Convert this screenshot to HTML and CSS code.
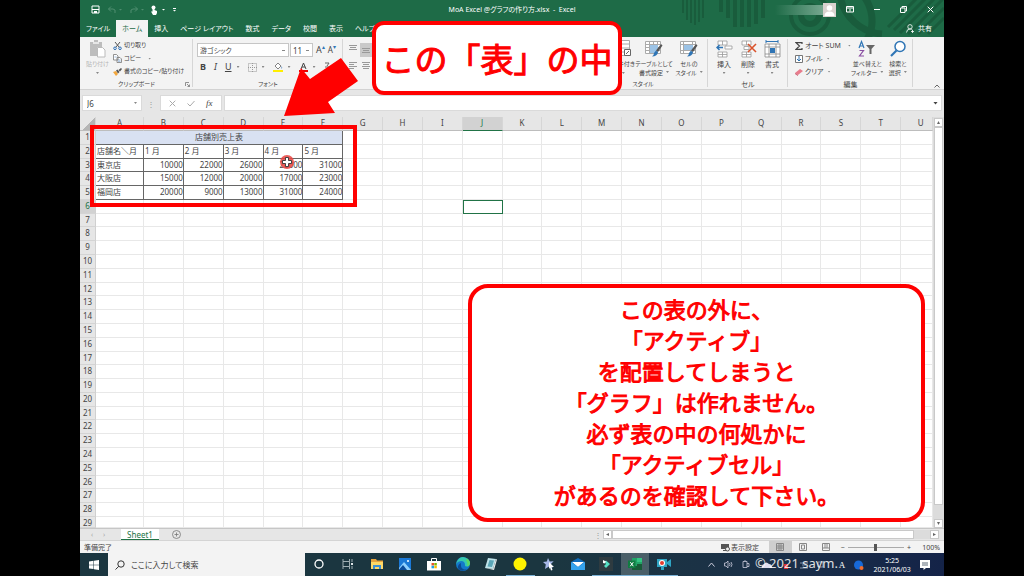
FILE: index.html
```html
<!DOCTYPE html>
<html lang="ja">
<head>
<meta charset="utf-8">
<meta name="viewport" content="width=device-width, initial-scale=1">
<title>MoA Excel @グラフの作り方.xlsx - Excel</title>
<link rel="stylesheet" href="styles.css">
</head>
<body>
<div class="stage">
<main class="app">
  <header class="top">
    <svg class="top-art" viewBox="0 0 264 37" aria-hidden="true">
      <g stroke="#195c3c" fill="none">
        <path stroke-width="2" d="M3 0v13M7 0v20M11 0v23M15 0v25M19 0v22M23 0v18"/>
        <path stroke-width="4" d="M41 0v12M48 0v18M55 0v27M62 0v27M69 0v27M76 0v24M83 0v18"/>
        <circle cx="130" cy="15" r="9" stroke-width="6"/>
        <circle cx="130" cy="15" r="19" stroke-width="4"/>
        <path stroke-width="7" d="M174 -12a38 38 0 0 1 8 58M160 -4a46 46 0 0 0 42 38"/>
        <path stroke-width="3" d="M208 27L240 -5M214 30L250 -6M220 33L260 -7M228 34L264 -2M238 34L264 8M248 34L264 18"/>
      </g>
    </svg>
    <div class="titlebar">
      <div class="quick">
        <button class="ib" aria-label="上書き保存"><svg width="9" height="9" viewBox="0 0 9 9"><path fill="none" stroke="#fff" d="M1 1h7v7H1z"/><path fill="#fff" d="M1 4h7v1H1zM3 6h3v2H3z"/></svg></button>
        <button class="ib" aria-label="元に戻す"><svg width="16" height="8" viewBox="0 0 16 8"><path fill="none" stroke="#4f8e70" d="M5 0.500L2.500 3 5 5.500M2.500 3H7q3 0 2 4"/><path fill="#4f8e70" d="M13 3h3l-1.500 1.500z"/></svg></button>
        <button class="ib" aria-label="やり直し"><svg width="16" height="8" viewBox="0 0 16 8"><path fill="none" stroke="#4f8e70" d="M7 0.500L9.500 3 7 5.500M9.500 3H5q-3 0-2 4"/><path fill="#4f8e70" d="M13 3h3l-1.500 1.500z"/></svg></button>
        <button class="ib" aria-label="タッチ"><svg width="16" height="10" viewBox="0 0 16 10"><circle cx="3.500" cy="2.500" r="2" fill="#fff"/><path fill="#fff" d="M2.500 2h2v3L7 6v2L6 10H3L1 6.500h1.500z"/><path fill="#fff" d="M12 4h3l-1.500 1.500z"/></svg></button>
        <button class="ib" aria-label="カスタマイズ"><svg width="5" height="5" viewBox="0 0 5 5"><path fill="#fff" d="M1 1h3v1H1zM1 3h3L2.500 4.500z"/></svg></button>
      </div>
      <h1 class="doc">MoA Excel @グラフの作り方.xlsx&nbsp; -&nbsp; Excel</h1>
      <div class="window-tools">
        <span class="account"></span>
        <svg width="13" height="14" viewBox="0 0 13 14" role="img" aria-label="ユーザー"><path fill="#d9d2cf" d="M0 0h13v14H0z"/><circle cx="6.500" cy="5" r="2.800" fill="#fff"/><path fill="#fff" d="M1.500 13q0-4.500 5-4.500t5 4.500z"/></svg>
        <button class="wb" aria-label="リボンの表示オプション"><svg width="8" height="7" viewBox="0 0 8 7"><path fill="none" stroke="#fff" d="M.5.500h7v5.500h-7zM.5 2h7M4 5.500V3"/></svg></button>
        <button class="wb" aria-label="最小化"><svg width="6" height="7" viewBox="0 0 6 7"><path fill="#fff" d="M0 3h6v1H0z"/></svg></button>
        <button class="wb" aria-label="元のサイズ"><svg width="7" height="7" viewBox="0 0 7 7"><path fill="none" stroke="#fff" d="M.5 2h4.500v4.500H.5zM2 2V.5h4.500V5H5"/></svg></button>
        <button class="wb" aria-label="閉じる"><svg width="7" height="7" viewBox="0 0 7 7"><path stroke="#fff" d="M.7.700l5.600 5.600M6.300.700L.7 6.300"/></svg></button>
      </div>
    </div>
    <nav class="tabs">
      <a href="#file">ファイル</a><a href="#home" class="on">ホーム</a><a href="#insert">挿入</a><a href="#layout">ページ レイアウト</a><a href="#formula">数式</a><a href="#data">データ</a><a href="#review">校閲</a><a href="#view">表示</a><a href="#help">ヘルプ</a>
      <a href="#share" class="share"><svg width="8" height="9" viewBox="0 0 8 9"><g fill="none" stroke="#fff" stroke-width=".8"><circle cx="4" cy="2.800" r="2.200"/><path d="M.5 8.500q.3-3.500 3.500-3.500 1.500 0 2.500 1M5 7.500h3M6.500 6v3"/></g></svg>共有</a>
    </nav>
  </header>

  <section class="ribbon" aria-label="リボン">
    <div class="group clip">
      <div class="tools">
        <button class="big off"><svg width="17" height="18" viewBox="0 0 17 18"><path fill="#bdbdbd" d="M1 2h4V0h4v2h4v5H8v9H1z"/><path fill="#e6e6e6" d="M4 2h6v2H4z"/><path fill="#fff" stroke="#bbb" d="M8.500 7.500h5l2.500 2.500v7H8.500z"/></svg><span>貼り付け</span><i class="caret"></i></button>
        <div class="stack">
          <button class="row"><svg width="9" height="8" viewBox="0 0 9 8"><path stroke="#555" d="M2 0l4 5M7 0L3 5"/><g fill="none" stroke="#2f6fb5"><circle cx="2" cy="6.300" r="1.300"/><circle cx="7" cy="6.300" r="1.300"/></g></svg>切り取り</button>
          <button class="row"><svg width="9" height="9" viewBox="0 0 9 9"><path fill="#fff" stroke="#777" stroke-width=".8" d="M.5.500h3l1.500 1.500v4h-4.500zM4 3.500h3l1.500 1.500v3.500H4z"/><path stroke="#5a8cc4" stroke-width=".6" d="M1.500 3h2M5 6h2.500M5 7.300h2.500"/></svg>コピー<i class="caret far"></i></button>
          <button class="row"><svg width="9" height="8" viewBox="0 0 9 8"><path fill="#f2a63b" d="M0 4l3-1 2 3-2 2z"/><path fill="#555" d="M3 2.500l1.500-1 2 2.500-1.500 1.500zM5.500 2L8 0l1 1-2 2.500z"/></svg>書式のコピー/貼り付け</button>
        </div>
      </div>
      <div class="label">クリップボード<svg class="launch" width="5" height="5" viewBox="0 0 5 5"><path fill="none" stroke="#777" stroke-width=".8" d="M.5 4V.5H4M2 2l2.500 2.500M4.500 2.500v2h-2"/></svg></div>
    </div>
    <div class="group font">
      <div class="tools col">
        <div class="line">
          <select class="face" aria-label="フォント"><option>游ゴシック</option></select>
          <select class="size" aria-label="フォント サイズ"><option>11</option></select>
          <button class="glyph">A<sup>▴</sup></button><button class="glyph small">A<sup>▾</sup></button>
        </div>
        <div class="line fmt">
          <button class="glyph"><b>B</b></button><button class="glyph"><em>I</em></button><button class="glyph"><u>U</u></button><i class="caret"></i>
          <button class="glyph" aria-label="罫線"><svg width="9" height="9" viewBox="0 0 9 9"><path fill="none" stroke="#999" stroke-dasharray="1 1" d="M.5.500h8v8h-8zM4.500 0v9M0 4.500h9"/></svg></button><i class="caret"></i>
          <button class="glyph" aria-label="塗りつぶしの色"><svg width="10" height="10" viewBox="0 0 10 10"><path fill="#fff" stroke="#666" stroke-width=".8" d="M2 4l3-3 3 3-3 3z"/><path fill="#2f6fb5" d="M8.500 4q1.500 2 0 3z"/><path fill="#ffee00" d="M0 8h10v2H0z"/></svg></button><i class="caret"></i>
          <button class="glyph" aria-label="フォントの色"><svg width="9" height="10" viewBox="0 0 9 10"><path fill="none" stroke="#444" d="M2 7l2.500-6L7 7M3 5h3"/><path fill="#e00" d="M0 8h9v2H0z"/></svg></button><i class="caret"></i>
          <button class="glyph" aria-label="ふりがな"><svg width="7" height="10" viewBox="0 0 7 10"><path fill="none" stroke="#666" d="M1 1h4L3 4M1 5h5L2 9h4"/></svg></button>
        </div>
      </div>
      <div class="label">フォント</div>
    </div>
    <div class="group align">
      <div class="tools">
        <svg width="42" height="34" viewBox="0 0 42 34"><path fill="#c9c9c9" d="M17 3h14v14H17z"/><path stroke="#999" d="M6 5.500h8M7 7.500h6M6 9.500h8M19 8.500h8M20 10.500h6M19 12.500h8M6 22.500h8M6 24.500h5M6 26.500h8M6 28.500h5M19 22.500h8M20 24.500h6M19 26.500h8M20 28.500h6"/></svg>
      </div>
      <div class="label"></div>
    </div>
    <div class="group style">
      <div class="tools end">
        <button class="big w1"><svg width="16" height="18" viewBox="0 0 16 18"><path fill="#fff" stroke="#aaa" d="M.5.500h14v15H.5zM0 4h15M0 8h15M0 12h15M5 0v15"/><path fill="#fff" stroke="#666" d="M9.500 9.500h6v6h-6zM11 14l3-3"/></svg><span>条件付き</span><i class="caret"></i></button>
        <button class="big w2"><svg width="18" height="18" viewBox="0 0 18 18"><path fill="#fff" stroke="#aaa" d="M.5 1.500h15v12H.5zM.5 4.500h15M.5 7.500h15M.5 10.500h15M4.500 1.500v12M8.500 1.500v12M12.500 1.500v12"/><path fill="#9cc3e6" d="M5 5h8v8H5z"/><path fill="#555" d="M16 4l1.500 1.500L13 12l-2-1.500z"/><path fill="#2f75b5" d="M11 10.500l2 2q-1 4-6 4 2-1 2-3.500z"/></svg><span>テーブルとして<br>書式設定<i class="caret in"></i></span></button>
        <button class="big w3"><svg width="18" height="18" viewBox="0 0 18 18"><path fill="#fff" stroke="#aaa" d="M.5 1.500h15v12H.5zM.5 4.500h15M.5 10.500h15M3.500 1.500v12M12.500 1.500v12"/><path fill="#9cc3e6" d="M4 5h9v5H4z"/><path fill="#555" d="M16 4l1.500 1.500L13 12l-2-1.500z"/><path fill="#2f75b5" d="M11 10.500l2 2q-1 4-6 4 2-1 2-3.500z"/></svg><span>セルの<br>スタイル<i class="caret in"></i></span></button>
      </div>
      <div class="label">スタイル</div>
    </div>
    <div class="group cells">
      <div class="tools even">
        <button class="big"><svg width="17" height="18" viewBox="0 0 17 18"><path fill="#fff" stroke="#999" stroke-width=".8" d="M2 1h9v4H2zM6.500 1v4M2 12h9v5H2zM6.500 12v5M2 14.500h9M9 6h7v3H9z"/><path fill="none" stroke="#2f75b5" stroke-width="1.500" d="M7 7.500H1M3.500 5L1 7.500 3.500 10"/></svg><span>挿入</span><i class="caret"></i></button>
        <button class="big"><svg width="17" height="18" viewBox="0 0 17 18"><path fill="#fff" stroke="#999" stroke-width=".8" d="M2 1h9v4H2zM6.500 1v4M2 12h9v5H2zM6.500 12v5M2 14.500h9M4 6.500h5v3H4z"/><path fill="none" stroke="#d9532c" stroke-width="1.600" d="M8 4l8 8M16 4l-8 8"/></svg><span>削除</span><i class="caret"></i></button>
        <button class="big"><svg width="17" height="18" viewBox="0 0 17 18"><path fill="#fff" stroke="#888" stroke-width=".8" d="M1 4h15v13H1zM5 4v13M12 4v13M1 7h15M1 14h15"/><path fill="#2f75b5" d="M6 8h5v5H6z"/><path fill="none" stroke="#2f75b5" d="M2 1.500h12M2 0v3M14 0v3"/></svg><span>書式</span><i class="caret"></i></button>
      </div>
      <div class="label">セル</div>
    </div>
    <div class="group edit">
      <div class="tools">
        <div class="stack">
          <button class="row"><svg width="8" height="8" viewBox="0 0 8 8"><path fill="none" stroke="#444" stroke-width="1.200" d="M7 2V.6H1L4.500 4 1 7.400h6V6"/></svg>オート SUM<i class="caret far"></i></button>
          <button class="row"><svg width="8" height="8" viewBox="0 0 8 8"><path fill="#fff" stroke="#777" d="M.5.500h7v7h-7z"/><path fill="none" stroke="#2f75b5" d="M4 1v5M2 4l2 2 2-2"/></svg>フィル<i class="caret near"></i></button>
          <button class="row"><svg width="8" height="8" viewBox="0 0 8 8"><path fill="#e87c8c" d="M0 5l5-4 3 2-5 4z"/><path fill="#c9566a" d="M0 5l3 2v1L0 6z"/></svg>クリア<i class="caret near"></i></button>
        </div>
        <button class="big"><svg width="18" height="18" viewBox="0 0 18 18"><path fill="none" stroke="#2f75b5" stroke-width="1.200" d="M1 8l2.500-6.500L6 8M2 6h3"/><path fill="none" stroke="#8a4fa3" stroke-width="1.200" d="M1.500 10.500h4L1.500 16h4.500"/><path fill="#666" d="M8 5h9l-3.500 4v5h-2V9z"/></svg><span>並べ替えと<br>フィルター<i class="caret in"></i></span></button>
        <button class="big"><svg width="18" height="18" viewBox="0 0 18 18"><circle cx="11" cy="6.500" r="5" fill="#fff" stroke="#2f75b5" stroke-width="1.500"/><path stroke="#2f75b5" stroke-width="2.200" d="M7.500 10.500L2 16"/></svg><span>検索と<br>選択<i class="caret in"></i></span></button>
      </div>
      <div class="label">編集</div>
    </div>
    <button class="collapse" aria-label="リボンを折りたたむ"><svg width="6" height="4" viewBox="0 0 6 4"><path fill="none" stroke="#666" d="M.5 3.500L3 1l2.500 2.500"/></svg></button>
  </section>

  <div class="formula">
    <div class="namebox"><input aria-label="名前ボックス" value="J6"><i class="caret"></i></div>
    <span class="grip">⋮</span>
    <div class="fx">
      <button aria-label="キャンセル"><svg width="7" height="7" viewBox="0 0 7 7"><path stroke="#aaa" d="M.7.700l5.600 5.600M6.300.700L.7 6.300"/></svg></button>
      <button aria-label="入力"><svg width="8" height="7" viewBox="0 0 8 7"><path fill="none" stroke="#aaa" d="M.5 3.500L3 6l4.500-5"/></svg></button>
      <button class="fn" aria-label="関数の挿入">fx</button>
    </div>
    <div class="entry"><input aria-label="数式バー"><i class="caret dark"></i></div>
  </div>

  <div class="book">
    <table class="grid" id="grid"><thead></thead><tbody></tbody></table>
    <div class="vscroll"><b class="arr up"></b><span class="thumb"></span><b class="arr down"></b></div>
  </div>

  <div class="sheetbar">
    <span class="nav">‹</span><span class="nav">›</span>
    <button class="sheet">Sheet1</button>
    <button class="add" aria-label="新しいシート"><svg width="9" height="9" viewBox="0 0 9 9"><g fill="none" stroke="#777" stroke-width=".8"><circle cx="4.500" cy="4.500" r="4"/><path d="M4.500 2.500v4M2.500 4.500h4"/></g></svg></button>
    <span class="grip push">⋮</span>
    <div class="hscroll"><b class="arr left"></b><span class="thumb"></span><b class="arr right"></b></div>
  </div>

  <footer class="status">
    <span>準備完了</span>
    <button class="disp"><svg width="9" height="9" viewBox="0 0 9 9"><path fill="#555" d="M0 1h8v5H0zM2 7h3v1H2z"/><circle cx="6.500" cy="6" r="2" fill="#f3f3f3" stroke="#555"/></svg>表示設定</button>
    <button class="vw on" aria-label="標準"><svg width="8" height="8" viewBox="0 0 8 8"><path fill="none" stroke="#888" d="M.5.500h7v7h-7zM0 3h8M0 5h8M3 0v8M5 0v8"/></svg></button>
    <button class="vw" aria-label="ページ レイアウト"><svg width="8" height="8" viewBox="0 0 8 8"><path fill="none" stroke="#888" d="M.5.500h7v7h-7zM2.500 2h3v4h-3z"/></svg></button>
    <button class="vw" aria-label="改ページ プレビュー"><svg width="8" height="8" viewBox="0 0 8 8"><path fill="none" stroke="#888" d="M.5.500h7v7h-7zM3 0v5M5 0v5M0 5h8"/></svg></button>
    <label class="zoom"><span>−</span><input type="range" min="10" max="190" value="100" aria-label="ズーム"><span>+</span></label>
    <output class="pct">100%</output>
  </footer>

  <nav class="taskbar" aria-label="タスク バー">
    <button class="start" aria-label="スタート"><svg width="10" height="10" viewBox="0 0 10 10"><path fill="#fff" d="M0 1.500l4.500-.7v3.900H0zM5 .7l5-.7v4.700H5zM0 5.200h4.500v3.900L0 8.500zM5 5.200h5V10l-5-.8z"/></svg></button>
    <label class="search"><svg width="10" height="10" viewBox="0 0 10 10"><g fill="none" stroke="#333"><circle cx="6" cy="4" r="3.200"/><path d="M3.800 6.300L.5 9.500"/></g></svg><input placeholder="ここに入力して検索" aria-label="検索"></label>
    <div class="pins">
      <button aria-label="Cortana"><svg viewBox="0 0 14 14"><circle cx="7" cy="7" r="4" fill="none" stroke="#fff" stroke-width="1.300"/></svg></button>
      <button aria-label="タスク ビュー"><svg viewBox="0 0 14 14"><path fill="none" stroke="#aebcc0" stroke-width=".9" d="M2 2v2.500h6.500V2M2 12V9.500h6.500V12M2 4.500v5M8.500 4.500v5M11 2v3M11 9v3"/><path fill="#dfe6e8" d="M10 6h2v2h-2z"/></svg></button>
      <button aria-label="エクスプローラー"><svg viewBox="0 0 14 14"><path fill="#e8a33d" d="M1 2h5l1 1.500h6V12H1z"/><path fill="#ffd867" d="M1 5h12v7H1z"/><path fill="#3f8fd2" d="M3 8h8v4H9v-2H5v2H3z"/></svg></button>
      <button aria-label="フォト"><svg viewBox="0 0 14 14"><path fill="#1a78d6" d="M1 1h12v12H1z"/><path fill="#8fd0ff" d="M1 11l5-6 7 8H1z"/><path fill="#0b4c9c" d="M1 12.500L5 8l4 5H1z"/><circle cx="10" cy="4" r="1" fill="#fff"/></svg></button>
      <button aria-label="ストア"><svg viewBox="0 0 14 14"><path fill="none" stroke="#fff" d="M4.500 4V1.500h5V4"/><path fill="#fff" d="M0 4h14v9.500H0z"/><path fill="#e5532d" d="M4.500 6H7v2.500H4.500z"/><path fill="#7db700" d="M7.300 6h2.500v2.500H7.300z"/><path fill="#1da1e8" d="M4.500 8.800H7v2.500H4.500z"/><path fill="#fdb900" d="M7.300 8.800h2.500v2.500H7.300z"/></svg></button>
      <button aria-label="Edge"><svg viewBox="0 0 14 14"><circle cx="7" cy="7" r="7" fill="#1479c9"/><path fill="#36c8b0" d="M1 4.500Q4-1 9 .4q5 1.600 5 6Q13.500 9 11 9.500q-2.500 0-2-1.500Q9 4 5 4 2 4 0 7z"/><path fill="#0c4a90" d="M5 6q-1 5 3 6.500 3 .5 4.500-1.500Q10 14 6 13.800 1 12.500 2 9q1-2.500 3-3z"/><path fill="#5bd764" d="M11 1.500Q14.500 4 14 7q-.5 2-3 2.500 1-4-1-6z"/></svg></button>
      <button aria-label="メモ帳"><svg viewBox="0 0 14 14"><path fill="#bfe3ea" d="M4 1l8 1-3 10-8-1z"/><path fill="#5ba6b7" d="M5.500 3l4.500.6-2 6.500-4.500-.6z"/><path fill="#e8e8e8" d="M1 11l8 1 3-10 1 .5-3 10.500z"/></svg></button>
      <button class="run" aria-label="黄色"><svg viewBox="0 0 14 14"><circle cx="7" cy="7" r="6.500" fill="#fff200"/></svg></button>
      <button aria-label="スター"><svg viewBox="0 0 14 14"><path fill="#a6b8e8" d="M6 1l1.700 3.500 4-.3-3 3 2 4L7 9.500 3 12l.8-4.500L1 5l3.800-.4z"/><path fill="#fff" d="M7 5l5 5H9.500l1 3-1.500.5-1-3L7 12z"/></svg></button>
      <button aria-label="メール"><svg viewBox="0 0 14 14"><path fill="#0f6cbd" d="M0 5l7-4 7 4v8H0z"/><path fill="#fff" d="M1 5h12l-6 5z"/><path fill="#35a3ee" d="M0 5l7 5 7-5v8H0z"/></svg></button>
      <button class="run" aria-label="動画編集"><svg viewBox="0 0 14 14"><path fill="#2e3b40" d="M0 0h14v14H0z"/><path fill="#55e0c4" d="M7 3.500L11 7l-4 4-2-2L7 7 5.500 5z"/><path fill="#fff" d="M4 3l3 1.500-1.500 2L4 6z"/></svg></button>
      <button class="run active" aria-label="Excel"><svg viewBox="0 0 14 14"><path fill="#21a366" d="M4 1h10v12H4z"/><path fill="#33c481" d="M9 1h5v4H9z"/><path fill="#185c37" d="M9 7h5v6H4V9h5z"/><path fill="#107c41" d="M0 3.500h7.500v7.500H0z"/><path stroke="#fff" d="M2.300 5.200l3 4M5.300 5.200l-3 4"/></svg></button>
      <button class="run" aria-label="録画"><svg viewBox="0 0 14 14"><path fill="#2fa5c4" d="M0 2h10v8H0zM10 5l4-3v8l-4-3zM4 10h3v3H4z"/><circle cx="5" cy="6" r="3" fill="#fff"/><circle cx="5" cy="6" r="2" fill="#e33a2e"/></svg></button>
    </div>
    <div class="tray">
      <svg width="7" height="5" viewBox="0 0 7 5"><path fill="none" stroke="#ccd" d="M.5 4.500l3-3.500 3 3.500"/></svg>
      <svg width="9" height="9" viewBox="0 0 9 9"><path fill="none" stroke="#ccd" stroke-width=".8" d="M.5 3h1.500L4 1v7L2 6H.5zM5.500 3q1 1.500 0 3M7 2q2 2.500 0 5"/></svg>
      <svg width="8" height="9" viewBox="0 0 8 9"><path fill="none" stroke="#ccd" stroke-width=".8" d="M1 1.500h4v6H1zM5 3.500h2v3H5M3 0v1"/></svg>
      <svg class="wide" width="70" height="10" viewBox="0 0 70 10"><path fill="#dde" d="M4 4q2-3 5 0 3 0 3 4H2q-1-3 2-4z"/><path fill="#d33" d="M24 4h4v5h-4z"/><path fill="none" stroke="#8893a8" d="M40 3h8M42 5h4M40 8h8M58 2h5v5h-5z"/></svg>
      <span class="ime">A</span>
      <svg width="10" height="10" viewBox="0 0 10 10"><circle cx="4.500" cy="5" r="4.500" fill="#1769d8"/><circle cx="7.500" cy="8" r="2" fill="#f36b2a"/></svg>
      <time class="clock">5:25<br>2021/06/03</time>
      <svg width="10" height="10" viewBox="0 0 10 10"><path fill="#fff" d="M0 0h10v8H6L3.500 10V8H0z"/><path stroke="#345" stroke-width=".8" d="M2 3h6M2 5h6"/></svg>
    </div>
  </nav>

  <div class="frame"></div>
  <svg class="pointer" width="14" height="14" viewBox="0 0 14 14" aria-hidden="true"><circle cx="7" cy="7" r="7" fill="#e8433f" fill-opacity=".85"/><path fill="#fff" stroke="#333" stroke-width=".9" d="M5.500 2.500h3v3h3v3h-3v3h-3v-3h-3v-3h3z"/></svg>
  <svg class="arrow" width="74" height="58" viewBox="0 0 74 58" aria-hidden="true"><path fill="red" d="M0 58L17 10l9 11L57 0l17 23-30 21 7 11z"/></svg>
  <p class="callout heading">この「表」の中</p>
  <p class="callout note">この表の外に、<br>「アクティブ」<br>を配置してしまうと<br>「グラフ」は作れません。<br>必ず表の中の何処かに<br>「アクティブセル」<br>があるのを確認して下さい。</p>
  <p class="mark">© 2021 saym.</p>
</main>
</div>
<script src="script.js"></script>
</body>
</html>
```
FILE: styles.css
```css
* { box-sizing: border-box; }
body {
  margin: 0;
  background: #000;
  color: #444;
  font: 7px/9px "Noto Sans", "Noto Sans CJK JP", sans-serif;
  font-feature-settings: "palt";
}
button, input, select {
  margin: 0; padding: 0; border: 0;
  background: none; color: inherit;
  font: inherit; font-feature-settings: inherit;
}
svg { display: block; flex: none; }
.stage { padding: 0 80px; }
.app {
  position: relative;
  display: flex; flex-direction: column;
  min-height: 100vh; overflow: hidden;
  background: #e6e6e6;
}

.top { position: relative; background: #1e6b47; color: #fff; }
.top-art { position: absolute; right: 0; top: 0; width: 264px; height: 37px; }
.titlebar, .tabs { position: relative; align-items: center; }
.titlebar { display: grid; grid-template-columns: 1fr auto 1fr; height: 19px; }
.quick { display: flex; align-items: center; gap: 6px; padding-left: 11px; }
.doc { margin: 0; font-size: 7px; font-weight: 400; }
.window-tools { display: flex; align-items: center; justify-content: flex-end; }
.account { width: 48px; height: 10px; background: linear-gradient(90deg, #1e6b47, #75a78f); }
.wb { display: grid; place-items: center; width: 27px; height: 18px; }
.tabs { display: flex; height: 18px; }
.tabs a { display: flex; align-items: center; height: 18px; padding: 0 6px; color: #fff; text-decoration: none; white-space: nowrap; }
.tabs .on { height: 17px; margin-top: 1px; background: #f3f3f3; color: #1e6b47; }
.tabs .share { margin-left: auto; padding-right: 12px; gap: 4px; }

.ribbon { position: relative; display: flex; height: 53px; background: #f3f3f3; border-bottom: 1px solid #d2d2d2; }
.group { display: flex; flex-direction: column; flex: none; padding: 3px 0 0; position: relative; }
.group::after { content: ""; position: absolute; right: 0; top: 2px; bottom: 2px; width: 1px; background: #d6d6d6; }
.clip { width: 113px; }
.font { width: 150px; }
.align { flex: 1; }
.style { width: 130px; }
.cells { width: 80px; }
.edit { width: 125px; margin-right: 31px; }
.clip, .style, .font .label, .edit .big { font-size: 6px; }
.tools { display: flex; flex: 1; min-height: 0; }
.tools.col { flex-direction: column; padding-top: 3px; }
.tools.end { justify-content: flex-end; padding-right: 3px; }
.tools.even { justify-content: space-around; padding: 0 4px; }
.label { position: relative; height: 9px; text-align: center; }
.launch { position: absolute; right: 3px; top: 2px; }
.big { display: flex; flex-direction: column; align-items: center; line-height: 9px; white-space: nowrap; }
.big > svg { margin-bottom: 2px; }
.clip .big { width: 33px; padding-left: 2px; }
.w2 { width: 38px; }
.w3 { width: 32px; }
.edit .big { width: 31px; }
.off { color: #b5b5b5; }
.stack { display: flex; flex-direction: column; gap: 4px; padding-top: 1px; }
.row { display: flex; align-items: center; gap: 2px; height: 9px; white-space: nowrap; }
.edit .stack { width: 65px; padding-left: 7px; }
.caret { display: inline-block; flex: none; width: 3px; height: 2px; background: #888; clip-path: polygon(0 0, 100% 0, 50% 100%); }
.big > .caret { margin-top: 3px; }
.caret.far { margin-left: 5px; }
.caret.near { margin-left: 2px; }
.caret.in { margin-left: 3px; vertical-align: 2px; }
.caret.dark { width: 5px; height: 3px; background: #444; }
.line { display: flex; align-items: center; height: 14px; padding-left: 4px; }
.face, .size { height: 14px; padding: 0 2px; border: 1px solid #c6c6c6; background: #fff; appearance: none;
  background-image: linear-gradient(#888, #888); background-size: 3px 1px; background-repeat: no-repeat; background-position: right 3px center; }
.face { width: 92px; }
.size { width: 23px; margin-left: 1px; font-size: 8px; }
.glyph { font-size: 9px; line-height: 12px; margin-left: 3px; }
.glyph sup { font-size: 6px; line-height: 6px; color: #2f75b5; }
.glyph.small { font-size: 8px; }
.fmt { margin-top: 3px; gap: 5px; padding-left: 4px; }
.collapse { position: absolute; right: 4px; bottom: 1px; }

.formula { display: flex; align-items: center; height: 26px; padding: 5px 2px 5px 2px; }
.namebox, .fx, .entry { display: flex; align-items: center; height: 16px; background: #fff; border: 1px solid #dadada; }
.namebox { width: 60px; padding: 0 4px; }
.namebox input, .entry input { flex: 1; width: 0; font-size: 8px; }
.grip { width: 18px; text-align: center; font-size: 8px; color: #999; }
.fx { width: 62px; margin-right: 2px; justify-content: space-around; padding: 0 3px; }
.fn { font: italic 9px/12px "Liberation Serif", serif; }
.entry { flex: 1; padding: 0 3px; }

.book { display: flex; flex: 1; min-height: 0; border-top: 1px solid #e6e6e6; }
.grid {
  display: grid; flex: 1; min-width: 0;
  grid-template-columns: 16px 48px repeat(19, minmax(0, 1fr)) minmax(0, .8fr);
  grid-template-rows: 14px repeat(28, minmax(0, 1fr)) minmax(0, .8fr);
  font-size: 8px; line-height: 12px; color: #444;
}
.grid thead, .grid tbody, .grid tr { display: contents; }
.grid th, .grid td { padding: 0 1px; overflow: hidden; white-space: nowrap; min-width: 0; }
.grid th { font-weight: 400; text-align: center; background: #e6e6e6; border-right: 1px solid #d0d0d0; border-bottom: 1px solid #d4d4d4; }
.grid thead th { border-right-color: #d6d6d6; border-bottom-color: #bdbdbd; }
.grid thead th:last-child { padding-left: 9px; }
.grid .corner { background: linear-gradient(135deg, #e6e6e6 55%, #b5b5b5 55%); }
.grid thead .cur { background: #d2d2d2; color: #217346; border-bottom: 1px solid #217346; }
.grid tbody .cur { background: #d2d2d2; color: #217346; }
.grid td { background: #fff; border-right: 1px solid #e8e8e8; border-bottom: 1px solid #e8e8e8; }
.grid .data { border-color: #666; }
.grid .title { grid-column: 2 / 8; text-align: center; background: #d9e1f2; border-color: #666; }
.grid .num { text-align: right; padding: 0; }
.grid .selected { outline: 1px solid #217346; outline-offset: -1px; border-color: #217346; }

.vscroll { display: flex; flex-direction: column; width: 11px; padding: 1px 1px 0; background: #dcdcdc; }
.vscroll .thumb { flex: 1; margin-bottom: 14px; background: #fff; border: 1px solid #c9c9c9; }
.arr { display: grid; place-items: center; flex: none; width: 9px; height: 9px; background: #fff; border: 1px solid #c9c9c9; }
.arr::before { content: ""; width: 3px; height: 3px; background: #666; }
.up::before { clip-path: polygon(0 100%, 50% 0, 100% 100%); }
.down::before { clip-path: polygon(0 0, 100% 0, 50% 100%); }
.left::before { clip-path: polygon(100% 0, 100% 100%, 0 50%); }
.right::before { clip-path: polygon(0 0, 0 100%, 100% 50%); }

.sheetbar { display: flex; align-items: center; height: 12px; border-top: 1px solid #c6c6c6; }
.nav { width: 12px; text-align: center; color: #aaa; }
.nav:first-child { margin-left: 6px; }
.sheet { width: 38px; height: 11px; margin-left: 11px; background: #fff; border-bottom: 1px solid #217346; color: #217346; font-size: 8px; line-height: 9px; }
.add { margin-left: 13px; }
.push { margin-left: auto; width: 10px; }
.hscroll { display: flex; width: 336px; margin-right: 5px; background: #dcdcdc; }
.hscroll .thumb { flex: 1; margin-right: 16px; background: #fff; border: 1px solid #c9c9c9; }

.status { display: flex; align-items: center; height: 13px; padding: 0 4px; background: #f3f3f3; border-top: 1px solid #d4d4d4; }
.disp { display: flex; align-items: center; gap: 1px; margin-left: auto; }
.vw { display: grid; place-items: center; width: 23px; height: 12px; }
.vw.on { background: #cfcfcf; }
.disp + .vw { margin-left: 10px; }
.zoom { display: flex; align-items: center; gap: 3px; margin-left: 3px; }
.zoom input { width: 56px; height: 9px; appearance: none; background: linear-gradient(#aaa, #aaa) center / 100% 1px no-repeat; }
.zoom input::-webkit-slider-thumb { appearance: none; width: 3px; height: 7px; background: #555; }
.pct { width: 29px; text-align: right; }

.taskbar { display: flex; height: 23px; background: linear-gradient(90deg, #1b3640 55%, #1b3048 80%, #142348); color: #fff; }
.start { display: grid; place-items: center; width: 28px; }
.search { display: flex; align-items: center; gap: 6px; width: 197px; padding: 0 7px; background: #f3f3f3; color: #333; }
.search input { flex: 1; min-width: 0; font-size: 8px; line-height: 14px; }
.search input::placeholder { color: #444; opacity: 1; }
.pins { display: flex; flex: 0 0 373px; }
.pins button { display: grid; place-items: center; flex: 1; border-bottom: 1px solid transparent; }
.pins svg { width: 14px; height: 14px; }
.pins .run { border-bottom-color: #7db4d8; }
.pins .active { background: #4a5f68; }
.tray { display: flex; align-items: center; justify-content: space-between; flex: 1; padding: 0 14px 0 30px; }
.ime { font: 9px/12px "Liberation Serif", serif; }
.clock { text-align: center; }

.callout { position: absolute; margin: 0; background: #fff; border: 4px solid red; color: red; text-align: center; font-family: "Noto Sans CJK JP", sans-serif; font-weight: 400; -webkit-text-stroke: 1px red; font-feature-settings: normal; white-space: nowrap; }
.heading { left: 292px; top: 21px; width: 250px; height: 74px; border-radius: 12px; font-size: 33px; line-height: 66px; }
.note { left: 388px; top: 284px; width: 457px; height: 238px; padding-top: 5px; border-radius: 20px; font-size: 22px; line-height: 31px; }
.frame { position: absolute; left: 10px; top: 125px; width: 267px; height: 82px; border: 4px solid red; }
.arrow { position: absolute; left: 204px; top: 58px; }
.pointer { position: absolute; left: 200px; top: 155px; }
.mark { position: absolute; right: 106px; bottom: 4px; margin: 0; color: #fff; opacity: .85; font-size: 13px; line-height: 18px; }
```
FILE: script.js
```js
const letters = "ABCDEFGHIJKLMNOPQRSTU".split("");
const sales = {
  2: ["店舗名＼月", "1 月", "2 月", "3 月", "4 月", "5 月"],
  3: ["東京店", 10000, 22000, 26000, 28000, 31000],
  4: ["大阪店", 15000, 12000, 20000, 17000, 23000],
  5: ["福岡店", 20000, 9000, 13000, 31000, 24000]
};
const active = { row: 6, col: "J" };

function cell(tag, text, cls) {
  const el = document.createElement(tag);
  el.textContent = text;
  if (cls) el.className = cls;
  return el;
}

const table = document.getElementById("grid");
const head = table.tHead.insertRow();
head.append(cell("th", "", "corner"));
letters.forEach(l => head.append(cell("th", l, l === active.col ? "cur" : "")));

for (let r = 1; r <= 29; r++) {
  const tr = table.tBodies[0].insertRow();
  tr.append(cell("th", r, r === active.row ? "cur" : ""));
  letters.forEach((l, c) => {
    if (r === 1 && c < 6) {
      if (c === 0) {
        const title = cell("td", "店舗別売上表", "title");
        title.colSpan = 6;
        tr.append(title);
      }
      return;
    }
    const value = sales[r] && c < 6 ? sales[r][c] : "";
    const cls = [];
    if (value !== "") cls.push("data");
    if (typeof value === "number") cls.push("num");
    if (r === active.row && l === active.col) cls.push("selected");
    tr.append(cell("td", value, cls.join(" ")));
  });
}
```
